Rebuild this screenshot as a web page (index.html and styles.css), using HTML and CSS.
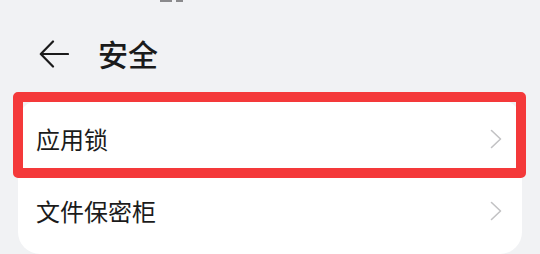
FILE: index.html
```html
<!DOCTYPE html>
<html lang="zh-CN">
<head>
<meta charset="UTF-8">
<meta name="viewport" content="width=device-width, initial-scale=1.0">
<title>安全</title>
<link rel="stylesheet" href="styles.css">
</head>
<body>
<div class="status">
    <span class="status-bit wide"></span>
    <span class="status-bit"></span>
</div>

<div class="header">
    <svg class="back" width="30" height="28" viewBox="0 0 30 28">
        <path d="M29 14H2M14 1.5L1.8 14L14 26.5" fill="none" stroke="#1b1b1b" stroke-width="2.2" stroke-linecap="round" stroke-linejoin="round"/>
    </svg>
    <span class="title">安全</span>
</div>

<div class="card">
    <div class="row">
        <span class="label">应用锁</span>
        <svg class="chevron" width="12" height="20" viewBox="0 0 12 20">
            <path d="M1.5 1.5L10.5 10L1.5 18.5" fill="none" stroke="#c2c2c4" stroke-width="1.6" stroke-linecap="round" stroke-linejoin="round"/>
        </svg>
    </div>
    <div class="row">
        <span class="label">文件保密柜</span>
        <svg class="chevron" width="12" height="20" viewBox="0 0 12 20">
            <path d="M1.5 1.5L10.5 10L1.5 18.5" fill="none" stroke="#c2c2c4" stroke-width="1.6" stroke-linecap="round" stroke-linejoin="round"/>
        </svg>
    </div>
</div>

<div class="highlight"></div>
</body>
</html>
```

FILE: styles.css
```css
body {
    font-family: "Noto Sans CJK SC", "Noto Sans", sans-serif;
    margin: 0;
    padding: 0;
    width: 540px;
    height: 254px;
    overflow: hidden;
    background-color: #f1f2f4;
    color: #1b1b1b;
    position: relative;
}
.status {
    display: flex;
    gap: 4px;
    height: 2px;
    padding-left: 160px;
}
.status-bit {
    width: 7px;
    height: 2px;
    background-color: #8a8a8c;
}
.status-bit.wide {
    width: 12px;
}
.header {
    display: flex;
    align-items: center;
    height: 54px;
    margin-top: 24px;
    padding-left: 39px;
}
.back {
    display: block;
    margin-right: 29px;
    position: relative;
    top: 1px;
}
.title {
    font-size: 30px;
    font-weight: 500;
    line-height: 54px;
}
.card {
    margin: 20px 18px 0 18px;
    padding: 3px 0 7px 0;
    background-color: #ffffff;
    border-radius: 22px;
}
.row {
    display: flex;
    align-items: center;
    justify-content: space-between;
    height: 72px;
    padding: 0 20px 0 18px;
}
.label {
    font-size: 24px;
    line-height: 30px;
}
.chevron {
    display: block;
}
.highlight {
    position: absolute;
    left: 13px;
    top: 92px;
    width: 493px;
    height: 66px;
    border: 10px solid #f4393a;
    border-radius: 5px;
}
```
